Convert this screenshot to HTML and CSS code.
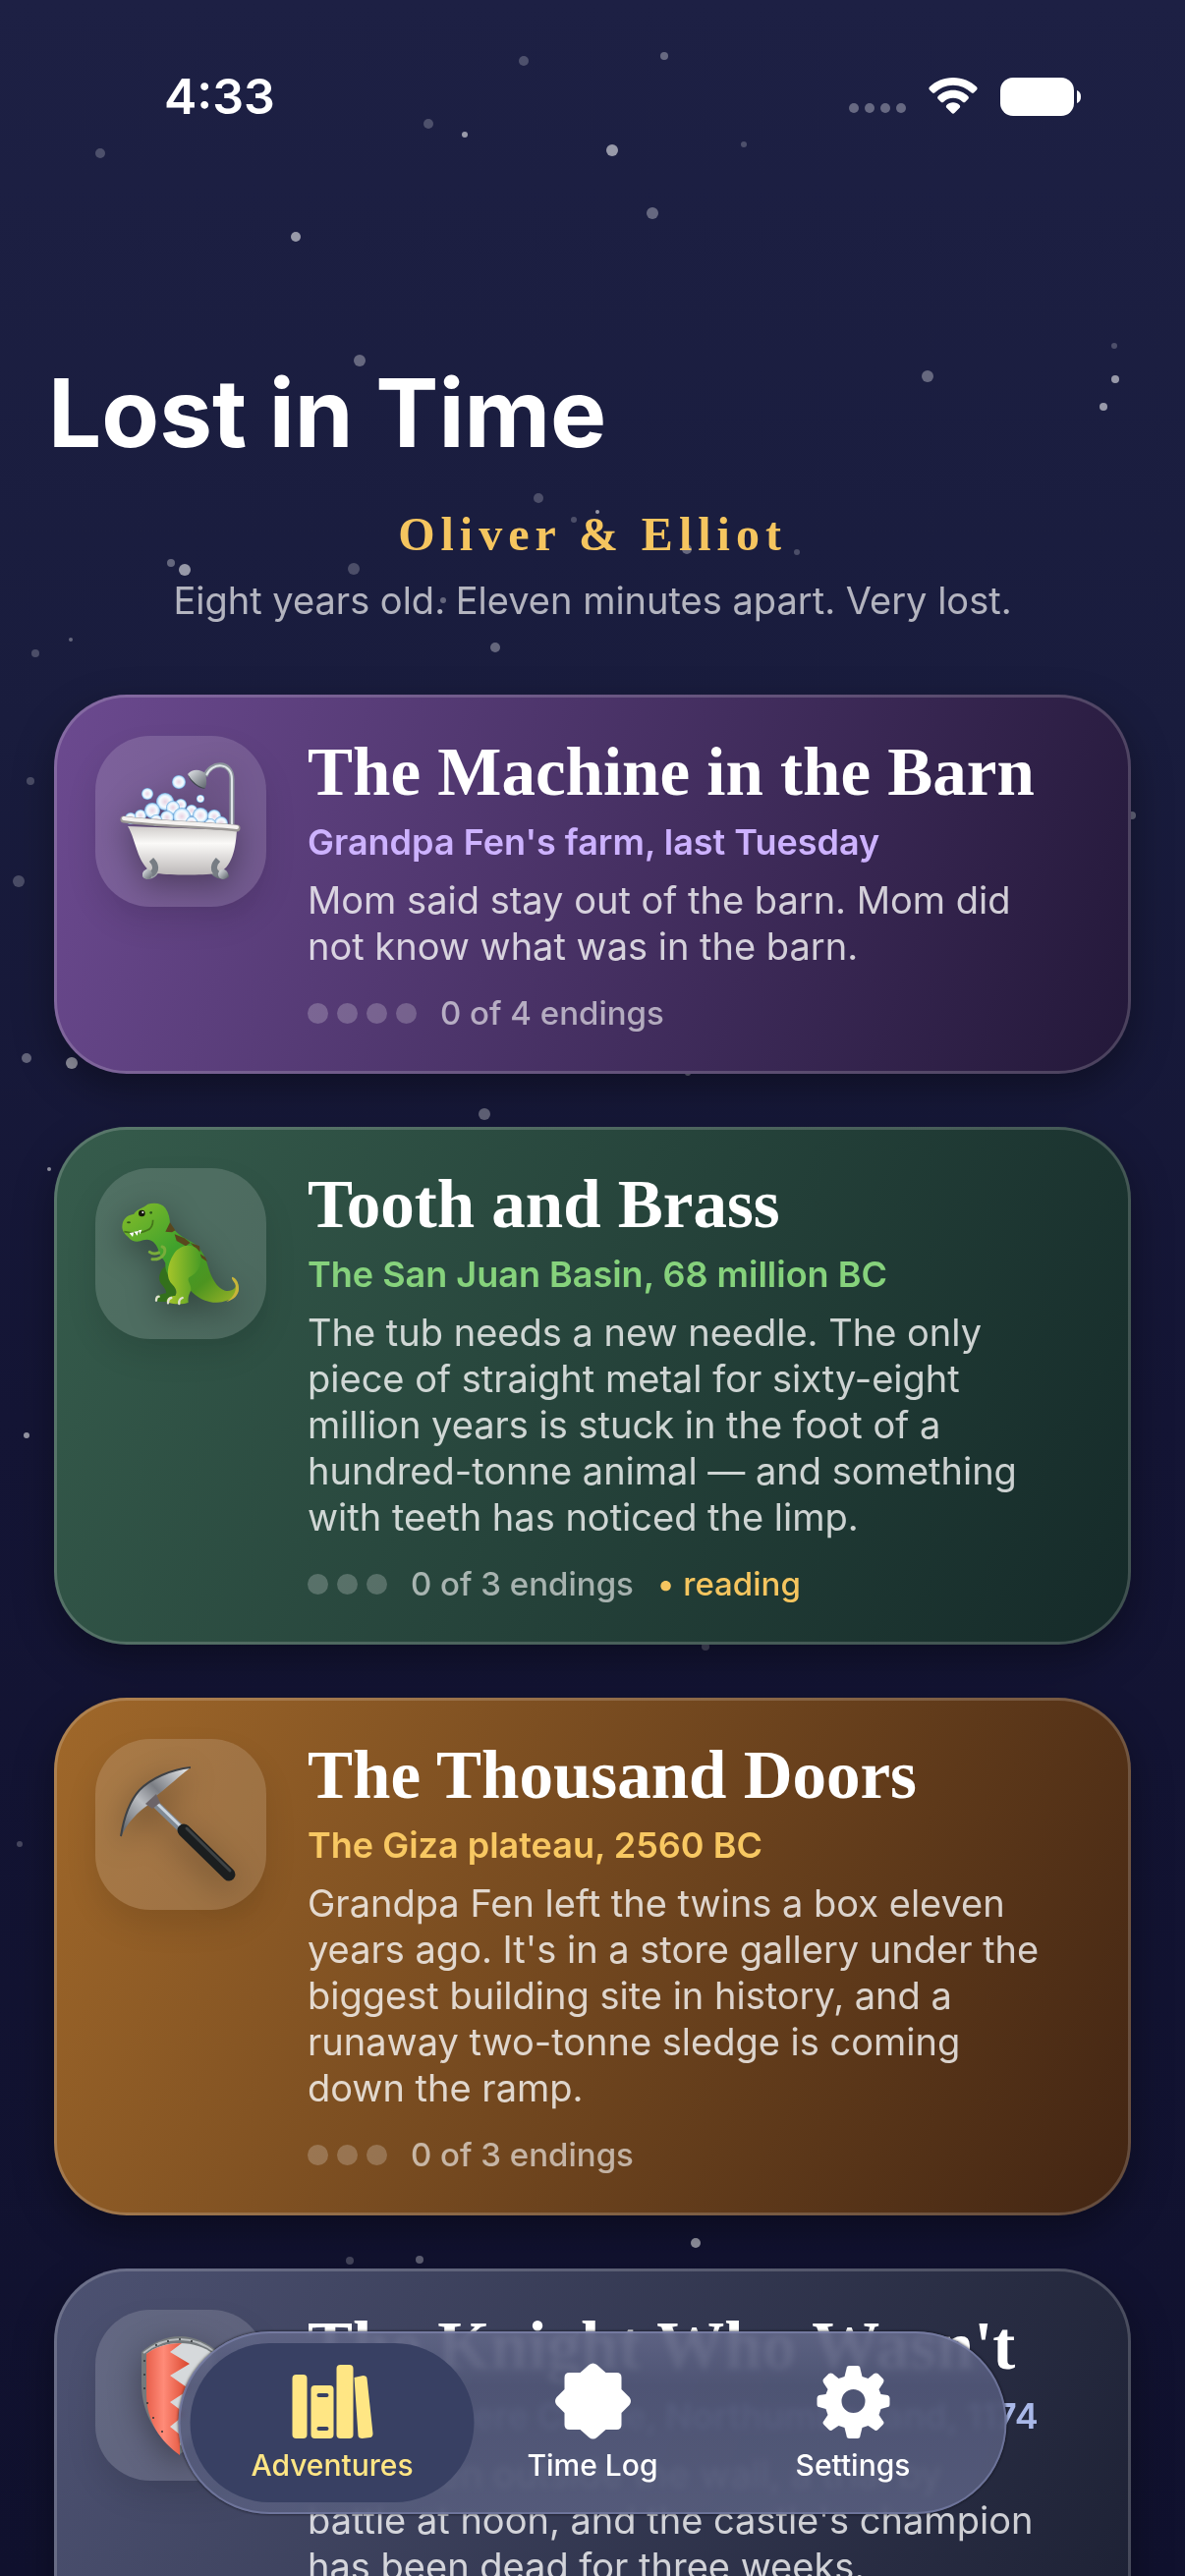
FILE: index.html
```html
<!DOCTYPE html>
<html lang="en">
<head>
    <meta charset="UTF-8">
    <meta name="viewport" content="width=device-width, initial-scale=1.0">
    <title>Lost in Time</title>
    <link rel="stylesheet" href="styles.css">
</head>
<body>
    <svg class="stars" viewBox="0 0 1206 2622" preserveAspectRatio="xMidYMin slice" aria-hidden="true">
        <g class="dim">
            <circle cx="533" cy="62" r="5"/><circle cx="436" cy="126" r="5"/><circle cx="102" cy="156" r="5"/>
            <circle cx="757" cy="147" r="3"/><circle cx="1134" cy="352" r="3"/><circle cx="548" cy="507" r="5"/>
            <circle cx="584" cy="529" r="3"/><circle cx="811" cy="562" r="3"/><circle cx="360" cy="579" r="6"/>
            <circle cx="36" cy="665" r="4"/><circle cx="31" cy="795" r="4"/><circle cx="19" cy="897" r="6"/>
            <circle cx="718" cy="1676" r="4"/><circle cx="20" cy="1877" r="3"/><circle cx="356" cy="2301" r="4"/>
        </g>
        <g class="mid">
            <circle cx="676" cy="57" r="4"/><circle cx="664" cy="217" r="6"/><circle cx="366" cy="367" r="6"/>
            <circle cx="944" cy="383" r="6"/><circle cx="699" cy="559" r="5"/><circle cx="174" cy="573" r="4"/>
            <circle cx="451" cy="611" r="3"/><circle cx="504" cy="659" r="5"/><circle cx="72" cy="651" r="2"/>
            <circle cx="27" cy="1077" r="5"/><circle cx="1152" cy="830" r="4"/><circle cx="493" cy="1134" r="6"/>
            <circle cx="427" cy="2300" r="4"/><circle cx="700" cy="1092" r="3"/>
        </g>
        <g class="bright">
            <circle cx="473" cy="137" r="3"/><circle cx="623" cy="153" r="6"/><circle cx="301" cy="241" r="5"/>
            <circle cx="1135" cy="386" r="4"/><circle cx="1123" cy="414" r="4"/><circle cx="608" cy="521" r="2"/>
            <circle cx="188" cy="580" r="6"/><circle cx="73" cy="1082" r="6"/><circle cx="50" cy="1190" r="2"/>
            <circle cx="27" cy="1461" r="3"/><circle cx="708" cy="2283" r="5"/>
        </g>
    </svg>

    <div class="status">
        <span class="time">4:33</span>
        <div class="status-icons">
            <span class="signal"><i></i><i></i><i></i><i></i></span>
            <svg class="wifi" viewBox="0 0 50 38" aria-hidden="true">
                <path d="M25 0C15.500 0 7 3.700 1 9.600c-.8.800-.8 2 0 2.800l2.800 2.900c.7.700 1.900.7 2.700 0C11.300 10.600 17.800 7.700 25 7.700s13.700 2.900 18.500 7.600c.8.700 2 .7 2.700 0l2.800-2.900c.8-.8.8-2 0-2.800C43 3.700 34.500 0 25 0z"/>
                <path d="M25 12.800c-6 0-11.400 2.400-15.300 6.200-.8.800-.8 2 0 2.800l2.900 2.900c.7.700 1.900.7 2.700 0 2.500-2.500 5.900-4 9.700-4s7.200 1.500 9.700 4c.8.700 2 .7 2.700 0l2.900-2.900c.8-.8.8-2 0-2.800-3.900-3.800-9.300-6.200-15.300-6.200z"/>
                <path d="M25 25.300c-2.600 0-4.900 1-6.600 2.700-.8.800-.7 2 0 2.800l5.200 5.300c.8.800 2 .8 2.800 0l5.200-5.300c.7-.8.800-2 0-2.800-1.700-1.700-4-2.700-6.600-2.700z"/>
            </svg>
            <svg class="battery" viewBox="0 0 82 39" aria-hidden="true">
                <rect width="75" height="39" rx="13"/>
                <path d="M78 13c3 1 4 3.500 4 6.500S81 25 78 26z"/>
            </svg>
        </div>
    </div>

    <main>
        <h1>Lost in Time</h1>
        <p class="names">Oliver &amp; Elliot</p>
        <p class="tagline">Eight years old. Eleven minutes apart. Very lost.</p>

        <div class="list">
            <a href="#barn" class="card barn">
                <span class="tile">
                    <svg viewBox="0 0 174 174" aria-hidden="true">
                        <defs>
                            <linearGradient id="bowl" x1="0" y1="0" x2="0" y2="1">
                                <stop offset="0" stop-color="#cfccca"/><stop offset=".35" stop-color="#fbfaf8"/><stop offset="1" stop-color="#bcb8b8"/>
                            </linearGradient>
                            <linearGradient id="metal" x1="0" y1="0" x2="1" y2="1">
                                <stop offset="0" stop-color="#e4e7ea"/><stop offset="1" stop-color="#5c636b"/>
                            </linearGradient>
                            <radialGradient id="bubble">
                                <stop offset="0" stop-color="#e9d3e2"/><stop offset=".6" stop-color="#f5fbff"/><stop offset=".8" stop-color="#cfe9fd"/><stop offset="1" stop-color="#6aa9dc"/>
                            </radialGradient>
                        </defs>
                        <path d="M139 90V44c0-19-22-18-27-3" fill="none" stroke="#8b939b" stroke-width="5"/>
                        <path d="M139 90V44c0-17-20-18-26-4" fill="none" stroke="#e0e5e9" stroke-width="2"/>
                        <path d="M94 39c5-6 13-5 18-1 1 5 2 10 0 15-4 2-16-7-18-14z" fill="url(#metal)"/>
                        <path d="M94 39c4 7 12 14 18 14-3 3-16-5-18-14z" fill="#3f464d"/>
                        <g fill="url(#bubble)">
                            <circle cx="85" cy="47" r="7"/><circle cx="53" cy="59" r="6"/><circle cx="107" cy="64" r="4"/>
                            <circle cx="87" cy="70" r="6"/><circle cx="98" cy="76" r="6"/><circle cx="121" cy="82" r="7"/>
                            <circle cx="36" cy="84" r="6"/><circle cx="46" cy="81" r="6"/><circle cx="71" cy="67" r="9"/>
                            <circle cx="79" cy="73" r="7"/><circle cx="58" cy="76" r="8"/><circle cx="73" cy="83" r="7"/>
                            <circle cx="107" cy="81" r="8"/><circle cx="88" cy="82" r="9"/><circle cx="128" cy="89" r="7"/>
                            <circle cx="62" cy="86" r="6"/><circle cx="98" cy="88" r="6"/><circle cx="117" cy="90" r="6"/>
                        </g>
                        <path d="M60 124c8 3 10 9 5 13-2 9-14 11-17 6 0-7 8-6 9-19zM120 124c-8 3-10 9-4 13 3 9 17 11 20 6 0-7-10-5-16-19z" fill="url(#metal)"/>
                        <path d="M33 92c9 14 10 45 30 48 15 2 45 2 60 0 17-4 20-28 21-44z" fill="url(#bowl)"/>
                        <path d="M29 85c36 5 76 5 115 9" fill="none" stroke="#9b9896" stroke-width="7" stroke-linecap="round"/>
                        <path d="M29 84c36 5 76 5 115 9" fill="none" stroke="#f4f2f0" stroke-width="4" stroke-linecap="round"/>
                        <path d="M57 126c5 5 6 11 0 15M125 126c-5 5-6 11 0 15" fill="none" stroke="#777d84" stroke-width="6"/>
                        <circle cx="53" cy="141" r="5" fill="url(#metal)"/><circle cx="130" cy="141" r="5" fill="url(#metal)"/>
                    </svg>
                </span>
                <div class="info">
                    <h2>The Machine in the Barn</h2>
                    <p class="place">Grandpa Fen's farm, last Tuesday</p>
                    <p class="blurb">Mom said stay out of the barn. Mom did not know what was in the barn.</p>
                    <div class="progress">
                        <span class="dots"><i></i><i></i><i></i><i></i></span>
                        <span>0 of 4 endings</span>
                    </div>
                </div>
            </a>

            <a href="#tooth" class="card tooth">
                <span class="tile">
                    <svg viewBox="0 0 522 522" aria-hidden="true">
                        <defs>
                            <linearGradient id="skin" x1="0" y1="0" x2="1" y2="1">
                                <stop offset="0" stop-color="#86bd2a"/><stop offset=".45" stop-color="#3fa12c"/><stop offset=".75" stop-color="#4c9420"/><stop offset="1" stop-color="#9db528"/>
                            </linearGradient>
                            <linearGradient id="thigh" x1="0" y1="0" x2="1" y2="0">
                                <stop offset="0" stop-color="#a8c62a"/><stop offset="1" stop-color="#4a9c25"/>
                            </linearGradient>
                        </defs>
                        <path d="M212 300c-16 16-20 34-14 48 6 12 20 20 18 34-14 2-30 6-32 18 0 6 6 8 14 8h44c8-18 4-40-2-54z" fill="#33701c"/>
                        <path d="M82 180c0-22 12-36 36-40 8-16 30-18 42-30 22-6 44-2 54 12 10 14 14 32 14 48 16 28 38 40 64 54 26 14 44 42 52 76 10 34 26 66 52 74 22 4 36-8 36-26-2-6-4-10-12-14 10 2 18 20 18 32 0 22-26 42-66 44-48 2-86-36-106-66-34 4-54-20-52-54-6-16-20-20-22-42-10-24-24-34-46-28-18 8-34 4-44-8-10-8-20-20-20-32z" fill="url(#skin)"/>
                        <path d="M418 332c14 4 20 22 20 36 0 20-16 34-38 40 24-14 34-38 26-56-4-8-12-14-8-20z" fill="#c9b53a"/>
                        <path d="M228 166l16 24-10 6-20-2zM242 202l30 12 18 14-14 10-28-16zM290 228l28 10 2 18-14-10zM320 262l16 10 6 14-18-12z" fill="#59471d"/>
                        <path d="M240 262c20-32 68-36 80 0 8 30-6 58-34 72-8 10 8 22 6 38-4 12-10 18-8 38-16 8-52 6-66-2 0-12 12-18 26-18 6-10 4-22-8-34-22-18-18-60 4-94z" fill="url(#thigh)"/>
                        <path d="M204 240c10 2 10 14 6 22-6 12-22 18-36 16M166 256c8 6 18 6 28 2" fill="none" stroke="#79ad3b" stroke-width="9" stroke-linecap="round"/>
                        <path d="M88 194c28 6 52 6 70-4 16-6 18-22 18-32" fill="none" stroke="#44751a" stroke-width="5"/>
                        <path d="M104 198l10 12 4-14zM118 194l10 12 4-14zM132 190l4 12 6-14z" fill="#fff"/>
                        <circle cx="142" cy="138" r="10" fill="#16180c"/><circle cx="145" cy="135" r="3" fill="#fff"/>
                        <circle cx="170" cy="136" r="4" fill="#2c5a18"/><ellipse cx="102" cy="166" rx="6" ry="3" fill="#2f5516"/>
                        <path d="M186 404q0-12 8-12M222 412q0-14 10-16M256 414q-2-14 10-18" fill="none" stroke="#dfe0cf" stroke-width="7" stroke-linecap="round"/>
                    </svg>
                </span>
                <div class="info">
                    <h2>Tooth and Brass</h2>
                    <p class="place">The San Juan Basin, 68 million BC</p>
                    <p class="blurb">The tub needs a new needle. The only piece of straight metal for sixty-eight million years is stuck in the foot of a hundred-tonne animal — and something with teeth has noticed the limp.</p>
                    <div class="progress">
                        <span class="dots"><i></i><i></i><i></i></span>
                        <span>0 of 3 endings</span>
                        <span class="reading">• reading</span>
                    </div>
                </div>
            </a>

            <a href="#doors" class="card doors">
                <span class="tile">
                    <svg viewBox="0 0 174 174" aria-hidden="true">
                        <defs>
                            <linearGradient id="blade" x1="0" y1="1" x2="1" y2="0">
                                <stop offset="0" stop-color="#55585c"/><stop offset=".4" stop-color="#b9bcc1"/><stop offset=".6" stop-color="#7b7e84"/><stop offset="1" stop-color="#eceef0"/>
                            </linearGradient>
                        </defs>
                        <path d="M58 63l31 30" stroke="#7f8994" stroke-width="8"/>
                        <path d="M59 62l31 30" stroke="#cbd5df" stroke-width="3"/>
                        <path d="M90 93l46 45" stroke="#1b1e1f" stroke-width="13" stroke-linecap="round"/>
                        <path d="M93 91l44 43" stroke="#3d4244" stroke-width="3" stroke-linecap="round"/>
                        <path d="M26 100c3-20 9-37 19-48 12-12 32-21 52-23-12 9-22 19-35 29l-8 9C44 74 33 84 26 100z" fill="url(#blade)"/>
                        <path d="M26 99c3-19 9-36 19-47 12-12 32-21 52-23" fill="none" stroke="#3e4145" stroke-width="2"/>
                        <path d="M51 66l11-10 4 9-8 6z" fill="#6c6468"/>
                    </svg>
                </span>
                <div class="info">
                    <h2>The Thousand Doors</h2>
                    <p class="place">The Giza plateau, 2560 BC</p>
                    <p class="blurb">Grandpa Fen left the twins a box eleven years ago. It's in a store gallery under the biggest building site in history, and a runaway two-tonne sledge is coming down the ramp.</p>
                    <div class="progress">
                        <span class="dots"><i></i><i></i><i></i></span>
                        <span>0 of 3 endings</span>
                    </div>
                </div>
            </a>

            <a href="#knight" class="card knight">
                <span class="tile">
                    <svg viewBox="0 0 174 174" aria-hidden="true">
                        <defs>
                            <linearGradient id="red" x1="0" y1="0" x2="1" y2="0">
                                <stop offset="0" stop-color="#e8604c"/><stop offset=".4" stop-color="#ff8b78"/><stop offset="1" stop-color="#d9452c"/>
                            </linearGradient>
                        </defs>
                        <path d="M47 43c10-9 24-16 39-16s29 7 39 16v32c0 34-18 56-39 72-21-16-39-38-39-72z" fill="#74797c"/>
                        <path d="M49 44c10-8 23-14 37-14s27 6 37 14" fill="none" stroke="#b9bdc0" stroke-width="2"/>
                        <path d="M52 45c9-7 20-11 34-11s25 4 34 11v30c0 30-15 49-34 63-19-14-34-33-34-63z" fill="#d6d9db"/>
                        <path d="M52 45c9-7 20-11 36-11l-12 9 20 12-20 12 20 14-20 13 16 12-16 13 10 8v21c-19-14-34-33-34-63z" fill="url(#red)"/>
                        <g fill="#2f3336"><circle cx="50" cy="52" r="1"/><circle cx="50" cy="66" r="1"/><circle cx="50" cy="80" r="1"/><circle cx="53" cy="95" r="1"/><circle cx="59" cy="110" r="1"/><circle cx="68" cy="124" r="1"/><circle cx="62" cy="36" r="1"/><circle cx="74" cy="32" r="1"/><circle cx="86" cy="30" r="1"/><circle cx="98" cy="32" r="1"/></g>
                    </svg>
                </span>
                <div class="info">
                    <h2>The Knight Who Wasn't</h2>
                    <p class="place">Winstermere Castle, Northumberland, 1174</p>
                    <p class="blurb">Sixty men outside the wall, a trial by battle at noon, and the castle's champion has been dead for three weeks.</p>
                    <div class="progress">
                        <span class="dots"><i></i><i></i><i></i></span>
                        <span>0 of 3 endings</span>
                    </div>
                </div>
            </a>
        </div>
    </main>

    <nav class="tabbar">
        <button class="tab active" type="button">
            <svg viewBox="0 0 84 78" aria-hidden="true">
                <rect x="1" y="12" width="15" height="65" rx="4"/>
                <path fill-rule="evenodd" d="M24 23h15a4 4 0 0 1 4 4v46a4 4 0 0 1-4 4H24a4 4 0 0 1-4-4V27a4 4 0 0 1 4-4zm4 8a2 2 0 0 0 0 4h8a2 2 0 0 0 0-4zm0 34a2 2 0 0 0 0 4h8a2 2 0 0 0 0-4z"/>
                <rect x="46" y="2" width="17" height="75" rx="4"/>
                <path d="M64 15l9-2c2 0 4 1 4 3l6 56c0 2-1 4-3 4l-8 1c-2 0-4-1-4-3z"/>
            </svg>
            <span>Adventures</span>
        </button>
        <button class="tab" type="button">
            <svg viewBox="0 0 84 78" aria-hidden="true">
                <path d="M38 2q4-3 8 0l9 8h11q5 0 5 5v12l8 8q3 4 0 8l-8 8v12q0 5-5 5H55l-9 8q-4 3-8 0l-9-8H18q-5 0-5-5V51l-8-8q-3-4 0-8l8-8V15q0-5 5-5h11z"/>
            </svg>
            <span>Time Log</span>
        </button>
        <button class="tab" type="button">
            <svg viewBox="0 0 84 78" aria-hidden="true">
                <path fill-rule="evenodd" d="M38 3h8q3 0 3 3l2 8 6 2 6-5q2-1 4 0l5 5q2 2 0 5l-4 6 2 5 7 1q2 1 2 3v6q0 3-2 3l-7 2-2 6 4 6q2 2 0 4l-5 5q-2 2-4 0l-6-4-6 2-2 8q0 3-3 3h-8q-3 0-3-3l-2-8-6-2-6 4q-2 2-4 0l-5-5q-2-2 0-4l4-6-2-6-7-2q-2 0-2-3v-6q0-2 2-3l7-1 2-5-4-6q-2-3 0-5l5-5q2-1 4 0l6 5 6-2 2-8q0-3 3-3zm4 24a12 12 0 1 0 0 24 12 12 0 0 0 0-24z"/>
            </svg>
            <span>Settings</span>
        </button>
    </nav>
</body>
</html>
```
FILE: styles.css
```css
*{
    margin:0;
    padding:0;
    box-sizing:border-box;
}
body{
    height:100vh;
    overflow:hidden;
    font-family:Inter, "Liberation Sans", sans-serif;
    color:#fff;
    background:linear-gradient(#1d2044, #191c3d 28%, #141535 55%, #10112e);
}
a{
    color:inherit;
    text-decoration:none;
}

.stars{
    position:fixed;
    top:0;
    left:0;
    width:100%;
    height:100%;
    z-index:-1;
    fill:#fff;
}
.stars .dim{
    opacity:.22;
}
.stars .mid{
    opacity:.33;
}
.stars .bright{
    opacity:.55;
}

/* status bar */
.status{
    display:flex;
    justify-content:space-between;
    align-items:center;
    height:196px;
    padding:0 106px 0 167px;
}
.time{
    font-size:50px;
    font-weight:600;
}
.status-icons{
    display:flex;
    align-items:center;
    gap:23px;
}
.status-icons svg{
    fill:#fff;
    display:block;
}
.signal{
    display:flex;
    gap:6px;
    padding-top:24px;
}
.signal i{
    width:10px;
    height:10px;
    border-radius:50%;
    background-color:#676982;
}
.wifi{
    width:50px;
}
.battery{
    width:82px;
}

/* header */
main{
    padding:164px 55px 0;
}
h1{
    font-size:96px;
    line-height:120px;
    font-weight:700;
    margin-left:-6px;
}
.names{
    margin-top:36px;
    text-align:center;
    font-family:"Liberation Serif", serif;
    font-size:48px;
    line-height:56px;
    font-weight:700;
    letter-spacing:6px;
    color:#f5c55f;
}
.tagline{
    margin-top:16px;
    text-align:center;
    font-size:38px;
    line-height:47px;
    color:rgba(255,255,255,.67);
}

/* story cards */
.list{
    display:flex;
    flex-direction:column;
    gap:54px;
    margin-top:72px;
}
.card{
    display:flex;
    align-items:flex-start;
    gap:42px;
    padding:39px;
    border:3px solid rgba(255,255,255,.18);
    border-radius:74px;
    background-origin:border-box;
    box-shadow:0 16px 40px rgba(0,0,0,.35);
}
.barn{
    background-image:linear-gradient(109deg, #6c4a90, #231839);
}
.tooth{
    background-image:linear-gradient(116deg, #365c4c, #152a29);
}
.doors{
    background-image:linear-gradient(116deg, #a0682a, #422513);
}
.knight{
    background-image:linear-gradient(114deg, #4d5272, #1c2033);
}
.tile{
    flex:none;
    width:174px;
    height:174px;
    border-radius:56px;
    background-color:rgba(255,255,255,.14);
    box-shadow:0 16px 32px rgba(0,0,0,.1);
}
.tile svg{
    display:block;
    width:100%;
    filter:drop-shadow(0 10px 16px rgba(0,0,0,.35));
}
.info{
    flex:1;
    padding-right:45px;
}
h2{
    font-family:"Liberation Serif", serif;
    font-size:69px;
    line-height:74px;
    font-weight:700;
    white-space:nowrap;
}
.place{
    margin-top:12px;
    font-size:36px;
    line-height:44px;
    font-weight:600;
    white-space:nowrap;
}
.barn .place{
    color:#cdb2ff;
}
.tooth .place{
    color:#86d27c;
}
.doors .place{
    color:#f8c862;
}
.knight .place{
    color:#a9b8e8;
}
.blurb{
    margin-top:14px;
    font-size:38px;
    line-height:47px;
    color:rgba(255,255,255,.78);
}
.progress{
    display:flex;
    align-items:center;
    gap:24px;
    margin-top:24px;
    font-size:33px;
    line-height:40px;
    font-weight:500;
    color:rgba(255,255,255,.6);
}
.dots{
    display:flex;
    gap:9px;
}
.dots i{
    width:21px;
    height:21px;
    border-radius:50%;
    background-color:rgba(255,255,255,.22);
}
.reading{
    color:#f5c55f;
}

/* floating tab bar */
.tabbar{
    position:fixed;
    left:50%;
    bottom:63px;
    transform:translateX(-50%);
    display:flex;
    padding:12px;
    border-radius:93px;
    background:linear-gradient(rgba(96,101,134,.94), rgba(80,86,118,.94) 30%, rgba(86,92,124,.94));
    backdrop-filter:blur(3px);
    box-shadow:inset 0 0 0 2px rgba(150,158,205,.4), 0 0 3px rgba(0,0,0,.8);
}
.tab{
    display:flex;
    flex-direction:column;
    align-items:center;
    width:289px;
    height:162px;
    padding-top:20px;
    border:0;
    border-radius:81px;
    background:none;
    color:#fff;
    font-family:inherit;
    font-size:30px;
    line-height:36px;
    font-weight:500;
}
.tab + .tab{
    margin-left:-24px;
}
.tab svg{
    width:84px;
    height:78px;
    margin-bottom:8px;
    fill:currentColor;
}
.tab.active{
    background-color:#384063;
    color:#ffe684;
}
```
